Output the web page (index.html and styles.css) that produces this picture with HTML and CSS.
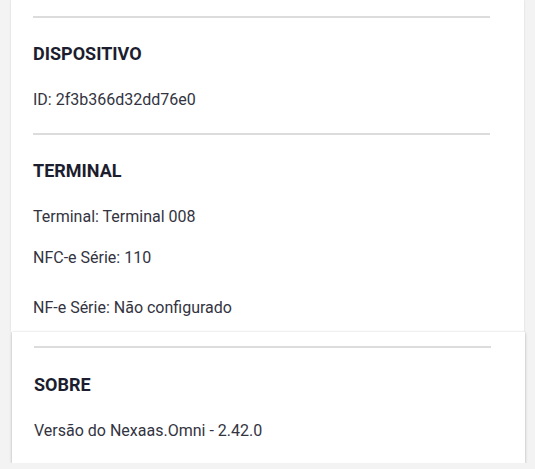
FILE: index.html
```html
<!DOCTYPE html>
<html lang="pt-BR">
<head>
<meta charset="utf-8">
<title>Configurações</title>
<link rel="stylesheet" href="styles.css">
</head>
<body>
<main class="page">
  <section class="card card-top">
    <hr class="divider">
    <div class="group">
      <h2 class="group-title">DISPOSITIVO</h2>
      <p class="item item-first">ID: 2f3b366d32dd76e0</p>
    </div>
    <hr class="divider divider-mid">
    <div class="group">
      <h2 class="group-title">TERMINAL</h2>
      <p class="item item-first">Terminal: Terminal 008</p>
      <p class="item item-next">NFC-e Série: 110</p>
      <p class="item item-wide">NF-e Série: Não configurado</p>
    </div>
  </section>
  <section class="card card-bottom">
    <hr class="divider">
    <div class="group">
      <h2 class="group-title group-title-low">SOBRE</h2>
      <p class="item item-first">Versão do Nexaas.Omni - 2.42.0</p>
    </div>
  </section>
</main>
</body>
</html>
```

FILE: styles.css
```css
html, body {
  margin: 0;
  padding: 0;
  background: #f3f3f3;
}

body {
  font-family: Roboto, "Liberation Sans", Arial, sans-serif;
  color: #2e2f3a;
}

.page {
  display: flex;
  flex-direction: column;
  width: 535px;
}

.card {
  background: #ffffff;
  box-sizing: border-box;
  width: 513px;
}

.card-top {
  margin-left: 11px;
  padding: 16px 34px 14px 22px;
  box-shadow: 0 0 2px rgba(0, 0, 0, 0.12);
}

.card-bottom {
  margin-left: 12px;
  padding: 14px 34px 22px 22px;
  box-shadow: 0 1px 3px rgba(0, 0, 0, 0.22), 0 0 2px rgba(0, 0, 0, 0.08);
  position: relative;
}

.divider {
  border: 0;
  height: 2px;
  margin: 0;
  background: #dcdcdc;
}

.divider-mid {
  margin-top: 23px;
}

.group {
  display: flex;
  flex-direction: column;
}

.group-title {
  margin: 25px 0 0;
  font-size: 18px;
  line-height: 22px;
  font-weight: 700;
  color: #1c1d2e;
}

.group-title-low {
  margin-top: 26px;
}

.item {
  margin: 0;
  font-size: 16px;
  line-height: 20px;
  color: #33343f;
}

.item-first {
  margin-top: 25px;
}

.item-next {
  margin-top: 21px;
}

.item-wide {
  margin-top: 30px;
}
```
